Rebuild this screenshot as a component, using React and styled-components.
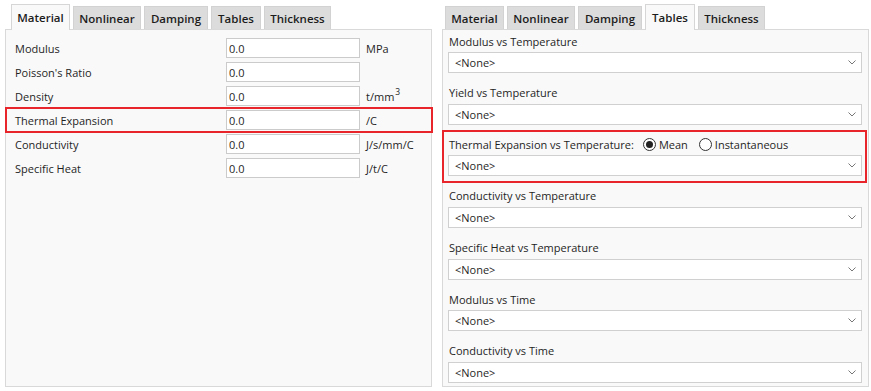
import React from "react";
import styled, { createGlobalStyle, css } from "styled-components";

const GlobalStyle = createGlobalStyle`
  html, body { margin: 0; padding: 0; background: #ffffff; }
  body {
    font-family: "Open Sans", "Noto Sans", "Liberation Sans", sans-serif;
    font-size: 11px;
    color: #1f1f1f;
  }
  * { box-sizing: border-box; }
`;

const Page = styled.div`
  display: flex;
  gap: 10px;
  padding: 4px 0 0 5px;
  width: 871px;
  height: 391px;
`;

const Pane = styled.div`
  display: flex;
  flex-direction: column;
  width: 427px;
`;

const TabStrip = styled.div`
  display: flex;
  align-items: flex-end;
  gap: 3px;
  height: 25px;
  padding-left: ${(p) => p.$offset}px;
  position: relative;
  z-index: 2;
`;

const Tab = styled.div`
  display: flex;
  align-items: center;
  justify-content: center;
  width: ${(p) => p.$w}px;
  font-weight: 600;
  font-size: 11.5px;
  color: #1c1c1c;
  border: 1px solid #d6d6d6;
  border-bottom: none;
  ${(p) =>
    p.$active
      ? css`
          height: 26px;
          margin-bottom: -1px;
          background: #f9f9f9;
          padding-bottom: 1px;
        `
      : css`
          height: 23px;
          background: #dcdcdc;
          border-color: #d2d2d2;
        `}
`;

const Body = styled.div`
  height: 358px;
  background: #f9f9f9;
  border: 1px solid #d9d9d9;
  display: flex;
  flex-direction: column;
`;

const FieldList = styled.div`
  display: flex;
  flex-direction: column;
  padding-top: 7px;
`;

const highlight = css`
  position: relative;
  &::after {
    content: "";
    position: absolute;
    border: 2px solid #e8252b;
    pointer-events: none;
  }
`;

const FieldRow = styled.div`
  display: grid;
  grid-template-columns: 205px 134px auto;
  column-gap: 6px;
  align-items: center;
  height: 24px;
  padding: 1px 0 3px 9px;
  ${(p) =>
    p.$hl &&
    css`
      ${highlight}
      &::after {
        top: -2px;
        bottom: 0;
        left: -1px;
        right: -2px;
      }
    `}
`;

const Label = styled.span`
  white-space: nowrap;
  color: #1f1f1f;
`;

const TextBox = styled.div`
  height: 20px;
  background: #ffffff;
  border: 1px solid #cbcbcb;
  padding: 0 2px;
  display: flex;
  align-items: center;
  color: #1f1f1f;
`;

const Unit = styled.span`
  white-space: nowrap;
  sup {
    font-size: 8.5px;
    vertical-align: 6px;
    line-height: 0;
    margin-left: 1px;
  }
`;

const GroupList = styled.div`
  display: flex;
  flex-direction: column;
`;

const Group = styled.div`
  display: flex;
  flex-direction: column;
  padding: 0 6px 0 5px;
  flex-shrink: 0;
  margin-bottom: ${(p) => (p.$last ? 0 : 8.67)}px;
  ${(p) =>
    p.$hl &&
    css`
      ${highlight}
      &::after {
        top: -3px;
        bottom: -7px;
        left: -1px;
        right: 1px;
      }
    `}
`;

const GroupHead = styled.div`
  display: flex;
  align-items: center;
  height: 22px;
  padding-left: 1px;
  white-space: nowrap;
`;

const RadioSet = styled.div`
  display: flex;
  align-items: center;
  gap: 11px;
  margin-left: 9px;
`;

const RadioOption = styled.label`
  display: flex;
  align-items: center;
  gap: 3px;
`;

const RadioCircle = styled.span`
  width: 13px;
  height: 13px;
  border-radius: 50%;
  border: 1px solid #333333;
  background: #ffffff;
  display: flex;
  align-items: center;
  justify-content: center;
  &::before {
    content: "";
    width: 7px;
    height: 7px;
    border-radius: 50%;
    background: ${(p) => (p.$checked ? "#222222" : "transparent")};
  }
`;

const Select = styled.div`
  height: 21px;
  background: #ffffff;
  border: 1px solid #d0d0d0;
  display: flex;
  align-items: center;
  justify-content: space-between;
  padding: 0 5px 0 6px;
  color: #1f1f1f;
`;

const Chevron = () => (
  <svg width="8" height="5" viewBox="0 0 8 5" fill="none">
    <path d="M0.5 0.5 L4 4 L7.5 0.5" stroke="#777" strokeWidth="1" />
  </svg>
);

const tabs = [
  { name: "Material", w: 59 },
  { name: "Nonlinear", w: 68 },
  { name: "Damping", w: 64 },
  { name: "Tables", w: 50 },
  { name: "Thickness", w: 67 },
];

const fields = [
  { label: "Modulus", unit: "MPa" },
  { label: "Poisson's Ratio", unit: "" },
  { label: "Density", unit: <>t/mm<sup>3</sup></> },
  { label: "Thermal Expansion", unit: "/C", hl: true },
  { label: "Conductivity", unit: "J/s/mm/C" },
  { label: "Specific Heat", unit: "J/t/C" },
];

const tables = [
  "Modulus vs Temperature",
  "Yield vs Temperature",
  "Thermal Expansion vs Temperature:",
  "Conductivity vs Temperature",
  "Specific Heat vs Temperature",
  "Modulus vs Time",
  "Conductivity vs Time",
];

const Tabs = ({ active, offset }) => (
  <TabStrip $offset={offset}>
    {tabs.map((t) => (
      <Tab key={t.name} $w={t.w} $active={t.name === active}>
        {t.name}
      </Tab>
    ))}
  </TabStrip>
);

export default function App() {
  return (
    <>
      <GlobalStyle />
      <Page>
        <Pane>
          <Tabs active="Material" offset={6} />
          <Body>
            <FieldList>
              {fields.map((f) => (
                <FieldRow key={f.label} $hl={f.hl}>
                  <Label>{f.label}</Label>
                  <TextBox>0.0</TextBox>
                  <Unit>{f.unit}</Unit>
                </FieldRow>
              ))}
            </FieldList>
          </Body>
        </Pane>
        <Pane>
          <Tabs active="Tables" offset={3} />
          <Body>
            <GroupList>
              {tables.map((t, i) => (
                <Group key={t} $hl={i === 2} $last={i === tables.length - 1}>
                  <GroupHead>
                    {t}
                    {i === 2 && (
                      <RadioSet>
                        <RadioOption>
                          <RadioCircle $checked />
                          Mean
                        </RadioOption>
                        <RadioOption>
                          <RadioCircle />
                          Instantaneous
                        </RadioOption>
                      </RadioSet>
                    )}
                  </GroupHead>
                  <Select>
                    &lt;None&gt;
                    <Chevron />
                  </Select>
                </Group>
              ))}
            </GroupList>
          </Body>
        </Pane>
      </Page>
    </>
  );
}
